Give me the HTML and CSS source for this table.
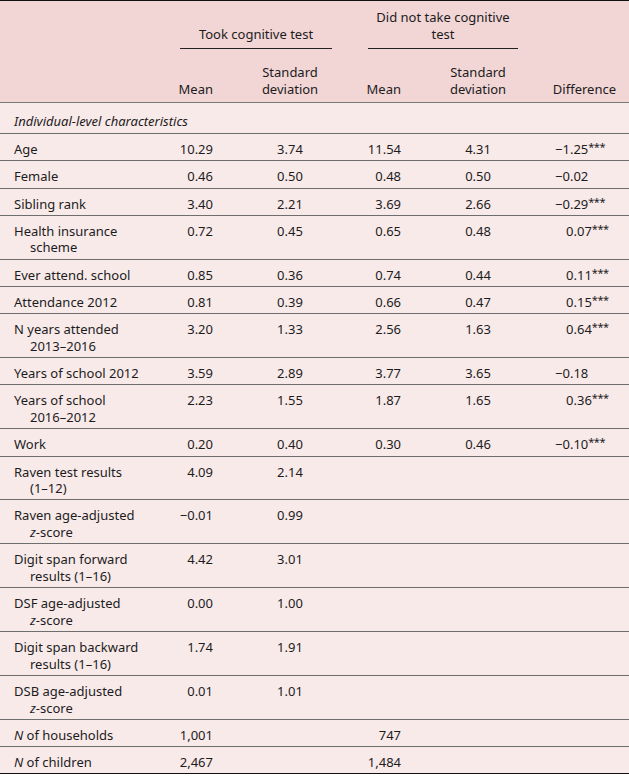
FILE: index.html
```html
<!DOCTYPE html>
<html lang="en">
<head>
<meta charset="utf-8">
<title>Cognitive test sample comparison</title>
<link rel="stylesheet" href="styles.css">
</head>
<body>
<table class="data">
  <colgroup>
    <col class="c-label">
    <col class="c-m1">
    <col class="c-sd1">
    <col class="c-m2">
    <col class="c-sd2">
    <col class="c-diff">
  </colgroup>
  <thead>
    <tr class="group-row">
      <th></th>
      <th colspan="2" class="grp grp1"><div class="grp-line">Took cognitive test</div></th>
      <th colspan="2" class="grp grp2"><div class="grp-line">Did not take cognitive test</div></th>
      <th></th>
    </tr>
    <tr class="col-row">
      <th></th>
      <th class="m1">Mean</th>
      <th class="sd1">Standard deviation</th>
      <th class="m2">Mean</th>
      <th class="sd2">Standard deviation</th>
      <th class="diff-h">Difference</th>
    </tr>
  </thead>
  <tbody>
    <tr class="section"><td colspan="6">Individual-level characteristics</td></tr>
    <tr><td class="label">Age</td><td class="m1">10.29</td><td class="sd1">3.74</td><td class="m2">11.54</td><td class="sd2">4.31</td><td class="diff">−1.25<sup>***</sup></td></tr>
    <tr><td class="label">Female</td><td class="m1">0.46</td><td class="sd1">0.50</td><td class="m2">0.48</td><td class="sd2">0.50</td><td class="diff">−0.02</td></tr>
    <tr><td class="label">Sibling rank</td><td class="m1">3.40</td><td class="sd1">2.21</td><td class="m2">3.69</td><td class="sd2">2.66</td><td class="diff">−0.29<sup>***</sup></td></tr>
    <tr><td class="label">Health insurance scheme</td><td class="m1">0.72</td><td class="sd1">0.45</td><td class="m2">0.65</td><td class="sd2">0.48</td><td class="diff pos">0.07<sup>***</sup></td></tr>
    <tr><td class="label">Ever attend. school</td><td class="m1">0.85</td><td class="sd1">0.36</td><td class="m2">0.74</td><td class="sd2">0.44</td><td class="diff pos">0.11<sup>***</sup></td></tr>
    <tr><td class="label">Attendance 2012</td><td class="m1">0.81</td><td class="sd1">0.39</td><td class="m2">0.66</td><td class="sd2">0.47</td><td class="diff pos">0.15<sup>***</sup></td></tr>
    <tr><td class="label">N years attended <span class="nw">2013–2016</span></td><td class="m1">3.20</td><td class="sd1">1.33</td><td class="m2">2.56</td><td class="sd2">1.63</td><td class="diff pos">0.64<sup>***</sup></td></tr>
    <tr><td class="label">Years of school 2012</td><td class="m1">3.59</td><td class="sd1">2.89</td><td class="m2">3.77</td><td class="sd2">3.65</td><td class="diff">−0.18</td></tr>
    <tr><td class="label">Years of school <span class="nw">2016–2012</span></td><td class="m1">2.23</td><td class="sd1">1.55</td><td class="m2">1.87</td><td class="sd2">1.65</td><td class="diff pos">0.36<sup>***</sup></td></tr>
    <tr><td class="label">Work</td><td class="m1">0.20</td><td class="sd1">0.40</td><td class="m2">0.30</td><td class="sd2">0.46</td><td class="diff">−0.10<sup>***</sup></td></tr>
    <tr><td class="label">Raven test results <span class="nw">(1–12)</span></td><td class="m1">4.09</td><td class="sd1">2.14</td><td class="m2"></td><td class="sd2"></td><td class="diff"></td></tr>
    <tr><td class="label">Raven age-adjusted <span class="nw"><i>z</i>-score</span></td><td class="m1">−0.01</td><td class="sd1">0.99</td><td class="m2"></td><td class="sd2"></td><td class="diff"></td></tr>
    <tr><td class="label">Digit span forward results <span class="nw">(1–16)</span></td><td class="m1">4.42</td><td class="sd1">3.01</td><td class="m2"></td><td class="sd2"></td><td class="diff"></td></tr>
    <tr><td class="label">DSF age-adjusted <span class="nw"><i>z</i>-score</span></td><td class="m1">0.00</td><td class="sd1">1.00</td><td class="m2"></td><td class="sd2"></td><td class="diff"></td></tr>
    <tr><td class="label">Digit span backward results <span class="nw">(1–16)</span></td><td class="m1">1.74</td><td class="sd1">1.91</td><td class="m2"></td><td class="sd2"></td><td class="diff"></td></tr>
    <tr><td class="label">DSB age-adjusted <span class="nw"><i>z</i>-score</span></td><td class="m1">0.01</td><td class="sd1">1.01</td><td class="m2"></td><td class="sd2"></td><td class="diff"></td></tr>
    <tr><td class="label"><i>N</i> of households</td><td class="m1">1,001</td><td class="sd1"></td><td class="m2">747</td><td class="sd2"></td><td class="diff"></td></tr>
    <tr class="last"><td class="label"><i>N</i> of children</td><td class="m1">2,467</td><td class="sd1"></td><td class="m2">1,484</td><td class="sd2"></td><td class="diff"></td></tr>
  </tbody>
</table>
</body>
</html>
```

FILE: styles.css
```css
html, body {
  margin: 0;
  padding: 0;
  background: #ffffff;
}

body {
  font-family: "Noto Sans", Lato, sans-serif;
  font-size: 13px;
  color: #1c1c1c;
}

.data {
  width: 629px;
  border-collapse: collapse;
  table-layout: fixed;
  border-top: 1px solid #111111;
}

.c-label { width: 168px; }
.c-m1 { width: 57px; }
.c-sd1 { width: 119px; }
.c-m2 { width: 68px; }
.c-sd2 { width: 118px; }
.c-diff { width: 99px; }

thead { background: #f2d5d5; }
tbody { background: #f9eaea; }

th {
  font-weight: normal;
}

td, th {
  line-height: 16.6px;
  padding: 0;
  vertical-align: top;
}

.group-row th {
  padding-top: 8px;
  vertical-align: bottom;
}

.grp { text-align: center; }
.grp1 { padding: 8px 12px 0 12px; }
.grp2 { padding: 8px 12px 0 24px; }

.grp-line {
  padding-bottom: 6px;
  border-bottom: 1px solid #222222;
}

.col-row th {
  padding-top: 15px;
  padding-bottom: 5px;
  vertical-align: bottom;
  border-bottom: 1px solid #7a7a7a;
}

tbody td {
  padding-top: 7px;
  padding-bottom: 2.7px;
  border-bottom: 1px solid #6e6e6e;
}

.section td {
  padding: 10px 14px 3px 14px;
  font-style: italic;
}

.label {
  padding-left: 30px;
  padding-right: 14px;
  text-indent: -16px;
}

.nw { white-space: nowrap; }

.m1 { text-align: right; padding-right: 12px; }
.sd1 { text-align: center; padding-left: 17px; padding-right: 6px; }
.m2 { text-align: right; padding-right: 11px; }
.sd2 { text-align: center; padding-left: 19px; padding-right: 5px; }
.diff { padding-left: 25px; }
.diff.pos { padding-left: 36px; }
.diff-h { text-align: right; padding-right: 13px; }

sup {
  font-size: 11px;
  line-height: 0;
  vertical-align: 3px;
  letter-spacing: -0.5px;
}

.last td {
  border-bottom: 1px solid #111111;
}
```
